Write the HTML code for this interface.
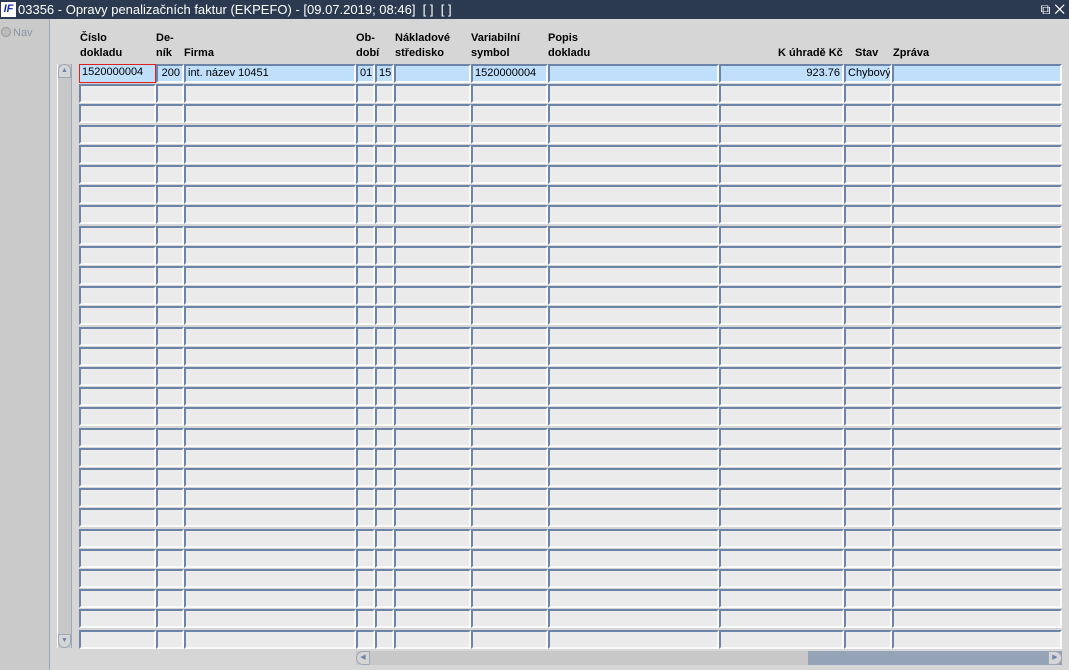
<!DOCTYPE html>
<html><head><meta charset="utf-8"><style>
body{margin:0;width:1069px;height:670px;background:#d6d6d6;position:relative;overflow:hidden;font-family:"Liberation Sans",sans-serif;font-size:11px;color:#000}
#title{position:absolute;left:0;top:0;width:1069px;height:19px;background:#2b3a50;color:#fff;font-size:13px;line-height:19px}
#title .logo{position:absolute;left:1px;top:2px;width:15px;height:15px;background:#fff;color:#1a2fb0;font-weight:bold;font-style:italic;font-size:11px;line-height:15px;text-align:center}
#title .t{position:absolute;left:18px;top:0}
#left{position:absolute;left:0;top:19px;width:49px;height:651px;background:#cacaca;border-right:1px solid #9aa8b8}
.nav{position:absolute;left:1px;top:27px;color:#8a96a6;font-size:11px}
.nav span{display:inline-block;width:8px;height:8px;border-radius:50%;background:#bbb;border:1px solid #999;vertical-align:-1px;margin-right:2px}
.h{position:absolute;font-weight:bold;font-size:11px;line-height:15px}
.c{position:absolute;box-sizing:border-box;height:19px;background:#ebebeb;border-top:2px solid #6b84a8;border-left:2px solid #6b84a8;border-bottom:2px solid #fafafa;border-right:2px solid #fafafa;font-size:11px;line-height:15px;padding-left:2px;white-space:nowrap;overflow:hidden}
.s{background:#bfdffb}
#vs{position:absolute;left:57px;top:64px;width:13px;height:584px;background:#c8c8c8;border-left:1px solid #fff;border-right:1px solid #9aa8b8}
#hs{position:absolute;left:356px;top:651px;width:706px;height:14px;background:#94a3b5}
</style></head><body>
<div id="title"><div class="logo">IF</div><div class="t">03356 - Opravy penalizačních faktur (EKPEFO) - [09.07.2019; 08:46] &nbsp;[ ] &nbsp;[ ]</div><div style="position:absolute;right:4px;top:0;font-size:14px">⧉ ✕</div></div>
<div id="left"><div class="nav" style="top:8px"><span></span>Nav</div></div>
<div class="h" style="left:80px;top:31px">Číslo<br>dokladu</div>
<div class="h" style="left:156px;top:31px">De-<br>ník</div>
<div class="h" style="left:184px;top:46px">Firma</div>
<div class="h" style="left:356px;top:31px">Ob-<br>dobí</div>
<div class="h" style="left:395px;top:31px">Nákladové<br>středisko</div>
<div class="h" style="left:471px;top:31px">Variabilní<br>symbol</div>
<div class="h" style="left:548px;top:31px">Popis<br>dokladu</div>
<div class="h" style="left:778px;top:46px">K úhradě Kč</div>
<div class="h" style="left:855px;top:46px">Stav</div>
<div class="h" style="left:893px;top:46px">Zpráva</div>
<div id="vs"><div style="position:absolute;left:0;top:0;width:13px;height:14px;background:#d6d6d6;border-radius:7px 7px 0 0;border:1px solid #9aa8b8;box-sizing:border-box;font-size:7px;text-align:center;color:#6b84a8;line-height:12px">▲</div><div style="position:absolute;left:0;bottom:0;width:13px;height:14px;background:#d6d6d6;border-radius:0 0 7px 7px;border:1px solid #9aa8b8;box-sizing:border-box;font-size:7px;text-align:center;color:#6b84a8;line-height:12px">▼</div></div>
<div id="hs"><div style="position:absolute;left:0;top:0;width:452px;height:14px;background:#c8c8c8"></div><div style="position:absolute;left:0;top:0;width:14px;height:14px;background:#d6d6d6;border:1px solid #9aa8b8;box-sizing:border-box;border-radius:7px 0 0 7px;font-size:7px;color:#6b84a8;line-height:12px;text-align:center">◀</div><div style="position:absolute;right:0;top:0;width:14px;height:14px;background:#d6d6d6;border:1px solid #9aa8b8;box-sizing:border-box;border-radius:0 7px 7px 0;font-size:7px;color:#6b84a8;line-height:12px;text-align:center">▶</div></div>
<div class="c s" style="left:79px;top:64px;width:77px;border:2px solid #e02020;border-width:1px">1520000004</div>
<div class="c s" style="left:156px;top:64px;width:28px;text-align:right;padding-right:2px">200</div>
<div class="c s" style="left:184px;top:64px;width:172px">int. název 10451</div>
<div class="c s" style="left:356px;top:64px;width:19px">01</div>
<div class="c s" style="left:375px;top:64px;width:19px">15</div>
<div class="c s" style="left:394px;top:64px;width:77px"></div>
<div class="c s" style="left:471px;top:64px;width:77px">1520000004</div>
<div class="c s" style="left:548px;top:64px;width:171px"></div>
<div class="c s" style="left:719px;top:64px;width:125px;text-align:right;padding-right:2px">923.76</div>
<div class="c s" style="left:844px;top:64px;width:48px">Chybový</div>
<div class="c s" style="left:892px;top:64px;width:170px"></div>
<div id="rows"></div>
<script>
var cols=[[79,77],[156,28],[184,172],[356,19],[375,19],[394,77],[471,77],[548,171],[719,125],[844,48],[892,170]];
var h='';for(var r=1;r<29;r++){var y=Math.round(64+r*20.2);for(var i=0;i<cols.length;i++)h+='<div class="c" style="left:'+cols[i][0]+'px;top:'+y+'px;width:'+cols[i][1]+'px"></div>';}
document.getElementById('rows').innerHTML=h;
</script>
</body></html>
